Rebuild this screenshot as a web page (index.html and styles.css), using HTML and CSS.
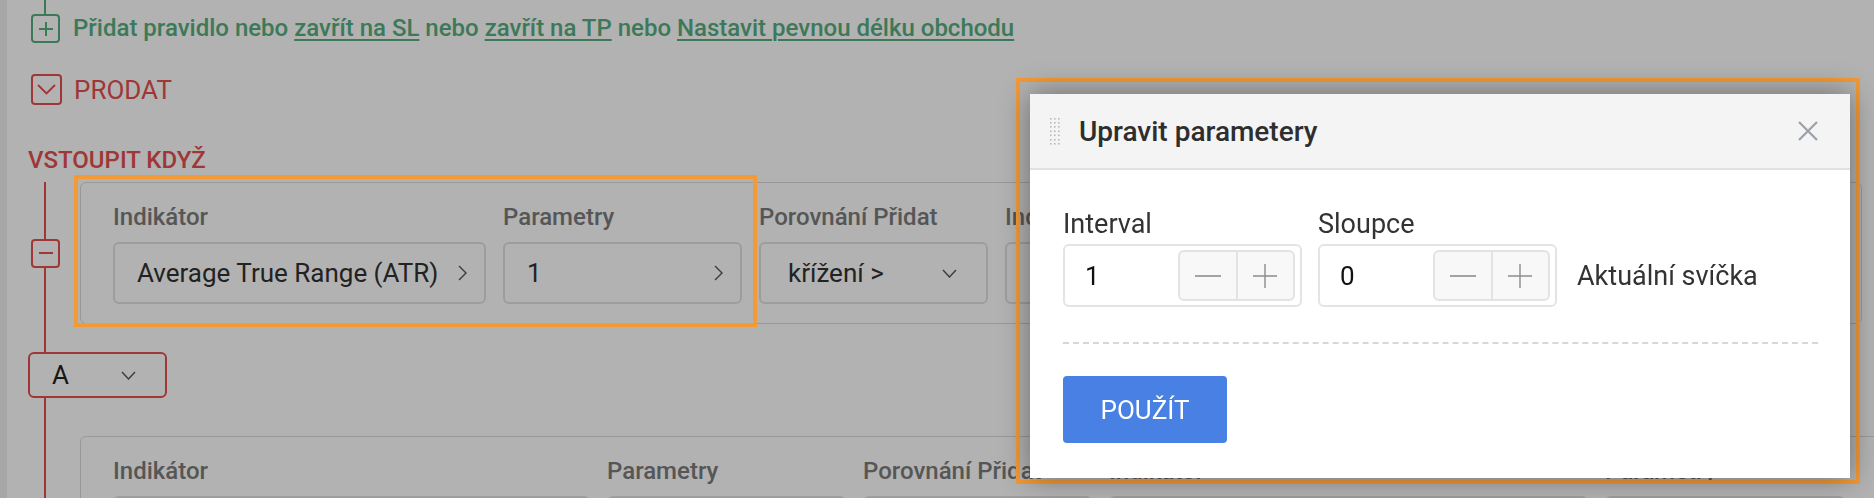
FILE: index.html
```html
<!DOCTYPE html>
<html lang="cs">
<head>
<meta charset="utf-8">
<title>Upravit parametery</title>
<link rel="stylesheet" href="styles.css">
</head>
<body>
<div class="page">
  <aside class="side"></aside>
  <main class="content">
    <div class="stub"></div>
    <div class="add-row">
      <span class="tbox tbox-green">
        <svg width="14" height="14" viewBox="0 0 14 14"><path d="M7 0V14M0 7H14" stroke="currentColor" stroke-width="2" fill="none"/></svg>
      </span>
      <p class="add-text">Přidat pravidlo nebo <a href="#">zavřít na SL</a> nebo <a href="#">zavřít na TP</a> nebo <a href="#">Nastavit pevnou délku obchodu</a></p>
    </div>
    <div class="sell-row">
      <span class="tbox tbox-lg tbox-red">
        <svg width="19" height="11" viewBox="0 0 19 11"><path d="M1 1L9.5 9.5L18 1" stroke="currentColor" stroke-width="1.8" fill="none"/></svg>
      </span>
      <span class="sell-label">PRODAT</span>
    </div>
    <h3 class="enter-title">VSTOUPIT KDYŽ</h3>
    <div class="tree">
      <div class="rule-row rule-row-1">
        <span class="tbox tbox-red">
          <svg width="14" height="2" viewBox="0 0 14 2"><path d="M0 1H14" stroke="currentColor" stroke-width="2"/></svg>
        </span>
        <div class="card card-1">
          <div class="fields">
            <div class="field w-ind1">
              <div class="label">Indikátor</div>
              <div class="select"><span>Average True Range (ATR)</span><svg class="chev-r" width="9" height="16" viewBox="0 0 9 16"><path d="M1 1L8 8L1 15" stroke="#555" stroke-width="1.4" fill="none"/></svg></div>
            </div>
            <div class="field w-par">
              <div class="label">Parametry</div>
              <div class="select"><span>1</span><svg class="chev-r" width="9" height="16" viewBox="0 0 9 16"><path d="M1 1L8 8L1 15" stroke="#555" stroke-width="1.4" fill="none"/></svg></div>
            </div>
            <div class="field w-cmp">
              <div class="label">Porovnání Přidat</div>
              <div class="select select-dd"><span>křížení &gt;</span><svg width="15" height="9" viewBox="0 0 15 9"><path d="M1 1L7.5 8L14 1" stroke="#555" stroke-width="1.4" fill="none"/></svg></div>
            </div>
            <div class="field w-ind1">
              <div class="label">Indikátor</div>
              <div class="select"><span></span><svg class="chev-r" width="9" height="16" viewBox="0 0 9 16"><path d="M1 1L8 8L1 15" stroke="#555" stroke-width="1.4" fill="none"/></svg></div>
            </div>
          </div>
        </div>
      </div>
      <div class="logic">
        <span>A</span>
        <svg width="15" height="9" viewBox="0 0 15 9"><path d="M1 1L7.5 8L14 1" stroke="#555" stroke-width="1.4" fill="none"/></svg>
      </div>
      <div class="rule-row rule-row-2">
        <div class="card card-2">
          <div class="fields">
            <div class="field w-ind2"><div class="label">Indikátor</div><div class="select"></div></div>
            <div class="field w-par"><div class="label">Parametry</div><div class="select"></div></div>
            <div class="field w-cmp"><div class="label">Porovnání Přidat</div><div class="select"></div></div>
            <div class="field w-ind3"><div class="label">Indikátor</div><div class="select"></div></div>
            <div class="field w-par2"><div class="label">Parametry</div><div class="select"></div></div>
          </div>
        </div>
      </div>
    </div>
  </main>
</div>

<div class="overlay"></div>
<div class="hl hl-1"></div>
<div class="hl hl-2"></div>

<section class="modal">
  <header class="modal-head">
    <svg class="drag" width="10" height="27" viewBox="0 0 10 27">
      <g fill="#b9b9b9">
        <rect x="0" y="0" width="1.6" height="1.6"/><rect x="4" y="0" width="1.6" height="1.6"/><rect x="8" y="0" width="1.6" height="1.6"/>
        <rect x="0" y="4" width="1.6" height="1.6"/><rect x="4" y="4" width="1.6" height="1.6"/><rect x="8" y="4" width="1.6" height="1.6"/>
        <rect x="0" y="8" width="1.6" height="1.6"/><rect x="4" y="8" width="1.6" height="1.6"/><rect x="8" y="8" width="1.6" height="1.6"/>
        <rect x="0" y="12.5" width="1.6" height="1.6"/><rect x="4" y="12.5" width="1.6" height="1.6"/><rect x="8" y="12.5" width="1.6" height="1.6"/>
        <rect x="0" y="16.5" width="1.6" height="1.6"/><rect x="4" y="16.5" width="1.6" height="1.6"/><rect x="8" y="16.5" width="1.6" height="1.6"/>
        <rect x="0" y="21" width="1.6" height="1.6"/><rect x="4" y="21" width="1.6" height="1.6"/><rect x="8" y="21" width="1.6" height="1.6"/>
        <rect x="0" y="25" width="1.6" height="1.6"/><rect x="4" y="25" width="1.6" height="1.6"/><rect x="8" y="25" width="1.6" height="1.6"/>
      </g>
    </svg>
    <h2 class="modal-title">Upravit parametery</h2>
    <svg class="close" width="20" height="20" viewBox="0 0 20 20"><path d="M1 1L19 19M19 1L1 19" stroke="#9ba1a7" stroke-width="2.2" fill="none"/></svg>
  </header>
  <div class="modal-body">
    <div class="params">
      <div class="param">
        <div class="param-label">Interval</div>
        <div class="num-input">
          <span class="num-value">1</span>
          <div class="stepper">
            <span class="step"><svg width="26" height="2" viewBox="0 0 26 2"><path d="M0 1H26" stroke="#8c8c8c" stroke-width="1.6"/></svg></span>
            <span class="step"><svg width="24" height="24" viewBox="0 0 24 24"><path d="M12 0V24M0 12H24" stroke="#8c8c8c" stroke-width="1.4"/></svg></span>
          </div>
        </div>
      </div>
      <div class="param">
        <div class="param-label">Sloupce</div>
        <div class="num-input">
          <span class="num-value">0</span>
          <div class="stepper">
            <span class="step"><svg width="26" height="2" viewBox="0 0 26 2"><path d="M0 1H26" stroke="#8c8c8c" stroke-width="1.6"/></svg></span>
            <span class="step"><svg width="24" height="24" viewBox="0 0 24 24"><path d="M12 0V24M0 12H24" stroke="#8c8c8c" stroke-width="1.4"/></svg></span>
          </div>
        </div>
      </div>
      <div class="current">Aktuální svíčka</div>
    </div>
    <div class="divider"></div>
    <button class="apply" type="button">POUŽÍT</button>
  </div>
</section>
</body>
</html>
```

FILE: styles.css
```css
* { box-sizing: border-box; }

html, body { margin: 0; padding: 0; }

body {
  width: 1874px;
  height: 498px;
  overflow: hidden;
  position: relative;
  background: #ffffff;
  font-family: Roboto, "Noto Sans", "Liberation Sans", sans-serif;
}

.page { display: flex; height: 498px; }

.side { flex: none; width: 7px; background: #efefef; }

.content { flex: 1; min-width: 0; padding-left: 21px; }

.stub { width: 2px; height: 14px; margin-left: 16px; background: #57ae80; }

.add-row { display: flex; align-items: center; height: 29px; }

.tbox {
  position: relative;
  flex: none;
  display: flex;
  align-items: center;
  justify-content: center;
  width: 29px;
  height: 29px;
  margin-left: 3px;
  border: 2px solid;
  border-radius: 4px;
  background: #ffffff;
}

.tbox-lg { width: 31px; height: 31px; }
.tbox-green { border-color: #57ae80; color: #57ae80; }
.tbox-red { border-color: #e44f4f; color: #e44f4f; }

.add-text {
  margin: 0 0 0 13px;
  font-size: 24px;
  line-height: 29px;
  font-weight: 500;
  color: #57ae80;
  white-space: nowrap;
}

.add-text a {
  color: inherit;
  text-decoration: underline;
  text-underline-offset: 3px;
  text-decoration-thickness: 2px;
}

.sell-row { display: flex; align-items: center; height: 31px; margin-top: 31px; }

.sell-label { margin-left: 12px; font-size: 26px; color: #e44f4f; }

.enter-title {
  margin: 42px 0 0;
  font-size: 24px;
  line-height: 26px;
  font-weight: 500;
  color: #e44f4f;
}

.tree { position: relative; margin-top: 9px; }

.tree::before {
  content: "";
  position: absolute;
  left: 16px;
  top: 0;
  bottom: 0;
  width: 2px;
  background: #e44f4f;
}

.rule-row { display: flex; align-items: center; }
.rule-row-1 { margin-top: 1px; }
.rule-row-1 .card { margin-left: 20px; }
.rule-row-2 { margin-top: 38px; }
.rule-row-2 .card { margin-left: 52px; }

.card {
  flex: none;
  border: 1px solid #dadada;
  border-radius: 6px;
  padding: 20px 32px 19px;
  background: #ffffff;
}

.card-1 { width: 1782px; }
.card-2 { width: 1800px; }

.fields { display: flex; gap: 17px; }
.field { flex: none; }
.w-ind1 { width: 373px; }
.w-par { width: 239px; }
.w-cmp { width: 229px; }
.w-ind2 { width: 477px; }
.w-ind3 { width: 479px; }
.w-par2 { width: 240px; }

.label {
  font-size: 24px;
  line-height: 28px;
  font-weight: 500;
  color: #7c7c7c;
  white-space: nowrap;
}

.select {
  display: flex;
  align-items: center;
  justify-content: space-between;
  height: 62px;
  margin-top: 11px;
  padding: 0 17px 0 22px;
  border: 2px solid #e1e1e1;
  border-radius: 6px;
  font-size: 26px;
  color: #323232;
  white-space: nowrap;
}

.select-dd { padding: 0 29px 0 27px; }

.logic {
  position: relative;
  display: flex;
  align-items: center;
  gap: 52px;
  width: 139px;
  height: 46px;
  margin-top: 28px;
  padding-left: 22px;
  border: 2px solid #e44f4f;
  border-radius: 6px;
  background: #ffffff;
  font-size: 26px;
  color: #222;
}

.overlay {
  position: fixed;
  inset: 0;
  background: rgba(0, 0, 0, 0.3);
}

.hl {
  position: absolute;
  border: 4px solid #f39a37;
}

.hl-1 { left: 74px; top: 175px; width: 683px; height: 152px; }
.hl-2 { left: 1016px; top: 78px; width: 844px; height: 406px; }

.modal {
  position: absolute;
  left: 1030px;
  top: 94px;
  width: 820px;
  background: #ffffff;
  box-shadow: 0 0 28px rgba(0, 0, 0, 0.4);
}

.modal-head {
  display: flex;
  align-items: center;
  height: 76px;
  padding: 0 32px 0 20px;
  background: #f4f4f4;
  border-bottom: 2px solid #e1e1e1;
}

.drag { flex: none; }

.modal-title {
  flex: 1;
  margin: 0 0 0 19px;
  font-size: 28px;
  font-weight: 500;
  color: #2e2e2e;
}

.close { flex: none; }

.modal-body { padding: 40px 32px 35px 33px; }

.params { display: flex; align-items: flex-end; gap: 16px; }

.param-label { font-size: 27px; line-height: 28px; color: #333333; }

.num-input {
  display: flex;
  align-items: center;
  width: 239px;
  height: 63px;
  margin-top: 6px;
  padding: 0 5px 0 20px;
  border: 2px solid #e4e4e4;
  border-radius: 6px;
}

.num-value { flex: 1; font-size: 26px; color: #111111; }

.stepper {
  display: flex;
  width: 117px;
  height: 51px;
  border: 2px solid #e3e3e3;
  border-radius: 6px;
  background: #f8f8f8;
}

.step { flex: 1; display: flex; align-items: center; justify-content: center; }
.step + .step { border-left: 2px solid #e3e3e3; }

.current {
  display: flex;
  align-items: center;
  height: 63px;
  margin-left: 4px;
  font-size: 27px;
  color: #333333;
}

.divider { margin-top: 35px; border-top: 2px dashed #d7d7d7; }

.apply {
  display: block;
  width: 164px;
  height: 67px;
  margin-top: 32px;
  border: none;
  border-radius: 4px;
  background: #4880e4;
  color: #ffffff;
  font-family: inherit;
  font-size: 26px;
}
```
